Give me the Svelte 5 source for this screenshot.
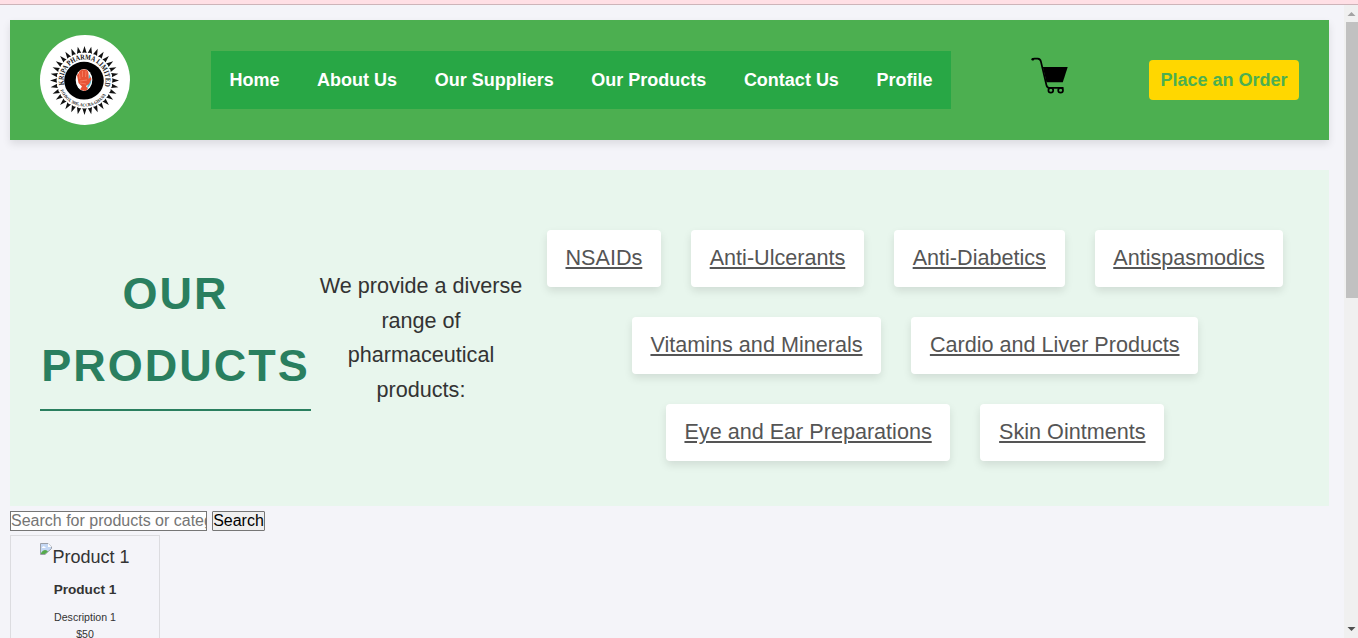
<script>
  const nav = ['Home', 'About Us', 'Our Suppliers', 'Our Products', 'Contact Us', 'Profile'];
  const categories = [
    ['NSAIDs', 'Anti-Ulcerants', 'Anti-Diabetics', 'Antispasmodics'],
    ['Vitamins and Minerals', 'Cardio and Liver Products'],
    ['Eye and Ear Preparations', 'Skin Ointments']
  ];
  const rays = Array.from({ length: 32 }, (_, i) => i * 11.25);
</script>

<div class="window">
  <div class="strip"></div>
  <div class="view">
    <main>
      <header>
        <svg class="logo" viewBox="0 0 90 90" width="90" height="90" role="img" aria-label="Kripa Pharma Limited">
          <defs>
            <path id="upper-arc" d="M24 49.900 A21 21 0 1 1 64.500 52" />
            <path id="lower-arc" d="M20.400 55.200 A26 26 0 0 0 66.500 59.300" />
          </defs>
          <circle cx="45" cy="45" r="45" fill="#fff" />
          {#each rays as angle}
            <path d="M42.300 18 L44.500 11 L46.700 18 Q44.500 16.800 42.300 18 Z" fill="#111" transform="rotate({angle} 44.5 45.5)" />
          {/each}
          <ellipse cx="44" cy="45.700" rx="19.800" ry="18.900" fill="#000" />
          <text class="name"><textPath href="#upper-arc" textLength="76" lengthAdjust="spacingAndGlyphs">KRIPA PHARMA LIMITED</textPath></text>
          <text class="address"><textPath href="#lower-arc" textLength="56" lengthAdjust="spacingAndGlyphs">P.O.BOX 3695, ACCRA-GHANA</textPath></text>
          <ellipse cx="44" cy="45" rx="8.300" ry="11" fill="#fff" />
          <path d="M49 39 Q53 45 50 50 L47 54 Z" fill="#55bcd0" />
          <path d="M38.500 48 L37 40 L38.500 38.500 L39.500 36 L41 35 L43 34.500 L45.500 34.500 L47.500 35.500 L48.500 38 L48.700 44 L50.500 42 L51.500 44 L49 49 L46 51 L48 54 L45 56 L40 54.500 L42 51.500 Z" fill="#e85436" />
          <path d="M40 44 L39.500 38.500 M42.500 42 V36 M45.500 42 L46 36 M40 46 L47 45 M40 48 L46 49" fill="none" stroke="#ff9479" stroke-width=".6" />
        </svg>
        <nav>
          {#each nav as item}<a href="#top">{item}</a>{/each}
        </nav>
        <svg class="cart" viewBox="0 0 40 40" width="40" height="40" role="img" aria-label="Cart">
          <path d="M2.500 4.700 L4 3.700 H7.700 Q10.300 4 10.900 6.500 L16.400 30 Q17 32.800 19 32.800 H33.500" fill="none" stroke="#000" stroke-width="1.700" />
          <circle cx="2.700" cy="4.200" r="1.300" />
          <path d="M12.800 12 H37.700 L32.800 27.200 H16.500 Z" />
          <circle cx="20.800" cy="35.200" r="2.400" fill="none" stroke="#000" stroke-width="1.700" />
          <circle cx="30.600" cy="35.200" r="2.400" fill="none" stroke="#000" stroke-width="1.700" />
        </svg>
        <a class="order" href="#top">Place an Order</a>
      </header>

      <section>
        <h2>OUR<br />PRODUCTS</h2>
        <p>We provide a diverse range of pharmaceutical products:</p>
        <div class="categories">
          {#each categories as row}
            <div class="row">
              {#each row as category}<div class="category"><a href="#top">{category}</a></div>{/each}
            </div>
          {/each}
        </div>
      </section>

      <div class="search">
        <input type="text" placeholder="Search for products or categories" />
        <button>Search</button>
      </div>

      <article>
        <div class="image">
          <svg viewBox="0 0 12 12" width="12" height="12">
            <path d="M.5 .5 H8 L11.500 4 V5.500 L5 11.500 H.5 Z" fill="#c4d7f4" stroke="#9b9fa8" />
            <path d="M1 10 Q4 5 8 8.500 L5 11 H1 Z" fill="#55a94b" />
            <path d="M2 4.500 Q3.500 2.500 5 4 L6 5 H2 Z M8 .5 V4 H11.500 Z" fill="#fff" />
          </svg><span>Product 1</span>
        </div>
        <h3>Product 1</h3>
        <div class="description">Description 1</div>
        <div class="price">$50</div>
      </article>
    </main>
    <div class="scrollbar">
      <svg viewBox="0 0 14 16" width="14" height="16"><path d="M3.500 11 L7.500 7 L11.500 11 Z" fill="#a3a3a3" /></svg>
      <div class="thumb"></div>
      <svg class="down" viewBox="0 0 14 16" width="14" height="16"><path d="M3.500 5 H11.500 L7.500 9 Z" fill="#505050" /></svg>
    </div>
  </div>
</div>

<style>
  :global(body) { margin: 0; overflow: hidden; }
  * { box-sizing: border-box; }
  .window {
    width: 1358px; height: 638px; overflow: hidden;
    display: flex; flex-direction: column;
    background: #f4f4f9; color: #333;
    font: 18px/1.6 "Liberation Sans", Arial, sans-serif;
  }
  .strip { height: 5px; flex: none; background: #ffdfe5; border-bottom: 1px solid #cdb4b9; }
  .view { display: flex; flex: 1; min-height: 0; }
  main { width: 1344px; padding: 15px 15px 0 10px; flex: none; }
  header {
    height: 120px; padding: 15px 30px;
    display: flex; align-items: center;
    background: #4caf50; box-shadow: 0 4px 8px rgba(0, 0, 0, .1);
  }
  .logo, .cart { display: block; flex: none; }
  .cart { margin: -10px 0 0 79px; }
  .name { font: bold 7.500px "Liberation Serif", serif; fill: #111; }
  .address { font: bold 4.500px "Liberation Serif", serif; fill: #222; }
  nav { width: 740px; height: 58px; margin-left: 81px; flex: none; padding: 0 18.500px; display: flex; align-items: center; justify-content: space-between; background: #28a745; }
  nav a { color: #fff; font-weight: bold; text-decoration: none; white-space: nowrap; }
  .order {
    width: 150px; height: 40px; margin-left: auto; display: flex; align-items: center; justify-content: center;
    border-radius: 4px; background: #ffd700; color: #4caf50;
    font-weight: bold; text-decoration: none; white-space: nowrap;
  }
  section {
    height: 336px; margin-top: 30px; padding: 45px 30px 30px;
    display: flex; background: #e8f6ed; text-align: center;
  }
  h2 {
    width: 271px; height: 154px; margin: 42px 0 0; padding-top: 1px; flex: none;
    border-bottom: 2px solid #2a7f5f; color: #2a7f5f;
    font-size: 45px; line-height: 72px; letter-spacing: 2px; white-space: nowrap;
  }
  p { width: 220px; margin: 54px 0 0; padding: 0 5px; flex: none; font-size: 21.600px; line-height: 34.560px; }
  .categories { width: 768px; display: flex; flex-direction: column; align-items: center; gap: 30px; padding-top: 15px; }
  .row { display: flex; gap: 30px; }
  .category {
    height: 57px; padding: 11px 18.700px; border-radius: 4px; background: #fff;
    box-shadow: 0 4px 8px rgba(0, 0, 0, .1); font-size: 21.600px; white-space: nowrap;
  }
  .category a { color: #555; text-decoration: underline; }
  .search { height: 20px; margin-top: 5px; display: flex; gap: 5px; }
  input, button {
    height: 20px; margin: 0; padding: 0; border: 1px solid #767676; border-radius: 0;
    font: 16px/18px "Liberation Sans", Arial, sans-serif;
  }
  input { width: 197px; background: #fff; }
  input::placeholder { color: #757575; }
  button { width: 53px; background: #efefef; color: #000; border-radius: 1px; }
  article { width: 150px; height: 160px; margin-top: 4px; border: 1px solid #dcdce0; text-align: center; }
  .image { height: 29px; margin-top: 7px; display: flex; justify-content: center; }
  h3 { margin: 7px 0 0; font-size: 13.600px; line-height: 22px; }
  .description, .price { font-size: 10.600px; line-height: 17px; }
  .description { margin-top: 8px; }
  .scrollbar { width: 14px; display: flex; flex-direction: column; background: #f0f0f0; }
  .scrollbar svg { display: block; flex: none; }
  .thumb { width: 12px; height: 276px; margin: 1px 0 0 2px; background: #c1c1c1; }
  .down { margin-top: auto; }
</style>
